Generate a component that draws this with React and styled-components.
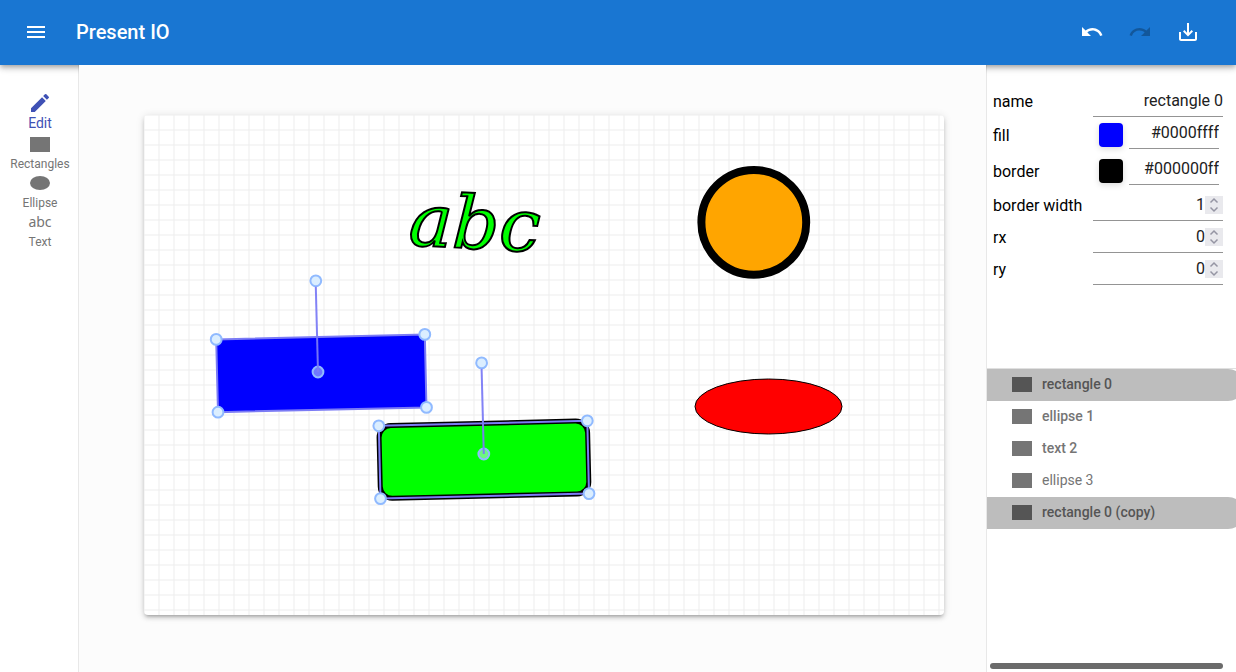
import React from "react";
import styled, { createGlobalStyle } from "styled-components";
import { MdMenu, MdUndo, MdRedo, MdSaveAlt, MdEdit } from "react-icons/md";

const GlobalStyle = createGlobalStyle`
  *, *::before, *::after { box-sizing: border-box; }
  body {
    margin: 0;
    font-family: Roboto, "Liberation Sans", sans-serif;
    font-size: 16px;
    color: #000;
    background: #fff;
  }
`;

const Page = styled.div`
  display: grid;
  grid-template-rows: auto 1fr;
  min-height: 100vh;
`;

const Header = styled.header`
  position: relative;
  z-index: 1;
  display: flex;
  align-items: center;
  height: 65px;
  padding: 0 24px 1px 12px;
  color: #fff;
  background: #1976d2;
  box-shadow: 0 2px 4px -1px rgba(0, 0, 0, 0.2),
    0 4px 5px 0 rgba(0, 0, 0, 0.14), 0 1px 10px 0 rgba(0, 0, 0, 0.12);
`;

const IconButton = styled.button`
  display: grid;
  place-items: center;
  width: 48px;
  height: 48px;
  padding: 0;
  border: 0;
  border-radius: 50%;
  color: inherit;
  background: none;

  &:disabled { color: rgba(0, 0, 0, 0.26); }
`;

const Title = styled.h1`
  flex: 1;
  margin: 0 0 0 16px;
  font-size: 20px;
  line-height: 32px;
  font-weight: 500;
`;

const Body = styled.div`
  display: grid;
  grid-template-columns: 79px minmax(0, 1fr) 250px;
`;

const Tools = styled.nav`
  display: flex;
  flex-direction: column;
  align-items: center;
  padding: 26px 0 0 2px;
  border-right: 1px solid #e8e8e8;
`;

const Tool = styled.button`
  display: flex;
  flex-direction: column;
  align-items: center;
  padding: 0 0 ${(p) => (p.$active ? 2 : 0)}px;
  border: 0;
  background: none;
  font-family: inherit;
  font-size: ${(p) => (p.$active ? 14 : 12)}px;
  line-height: 16px;
  color: ${(p) => (p.$active ? "#3f51b5" : "#757575")};
`;

const ToolIcon = styled.span`
  display: grid;
  justify-items: center;
  align-items: start;
  height: 23px;
  padding-top: 4px;
`;

const TextGlyph = styled.span`
  font-family: "Noto Sans", sans-serif;
  font-size: 14px;
  line-height: 14px;
`;

const Workspace = styled.main`
  position: relative;
  z-index: 2;
  padding: 50px 42px 50px 65px;
  background: #fcfcfc;
`;

const Sheet = styled.svg`
  display: block;
  width: 100%;
  height: auto;
  border-radius: 4px;
  background: #fff;
  box-shadow: 0 3px 3px -2px rgba(0, 0, 0, 0.2),
    0 3px 4px 0 rgba(0, 0, 0, 0.14), 0 1px 8px 0 rgba(0, 0, 0, 0.12);
`;

const Panel = styled.aside`
  display: grid;
  grid-template-rows: minmax(0, 1fr) minmax(0, 1fr);
  min-width: 0;
  overflow: hidden;
  border-left: 1px solid #e8e8e8;
`;

const Properties = styled.form`
  padding: 20px 13px 0 6px;
`;

const Field = styled.div`
  display: grid;
  grid-template-columns: 100px minmax(0, 1fr);
  align-items: center;
  height: ${(p) => (p.$tall ? 36 : 32)}px;
`;

const Label = styled.label`
  padding-top: 2px;
  line-height: 20px;
  white-space: nowrap;
`;

const Control = styled.div`
  display: flex;
  align-items: center;
  height: 32px;
  border-bottom: 1px solid #949494;
`;

const ColorControl = styled.div`
  display: flex;
  align-items: flex-start;
  gap: 6px;
  height: 36px;
  padding: 0 4px 0 6px;
`;

const ColorInput = styled.input`
  appearance: none;
  flex: none;
  width: 24px;
  height: 24px;
  margin: 6px 0 0;
  padding: 0;
  border: 0;
  border-radius: 4px;
  box-shadow: 0 2px 6px rgba(0, 0, 0, 0.15);
  overflow: hidden;

  &::-webkit-color-swatch-wrapper { padding: 0; }
  &::-webkit-color-swatch { border: 0; }
`;

const TextInput = styled.input`
  appearance: textfield;
  flex: 1;
  min-width: 0;
  width: 100%;
  height: 31px;
  padding: 0;
  border: 0;
  outline: 0;
  background: none;
  font: inherit;
  color: #212121;
  text-align: right;

  &::-webkit-inner-spin-button { appearance: none; margin: 0; }
`;

const Spinner = styled.span`
  display: grid;
  place-items: center;
  width: 18px;
  height: 18px;
  background: #e9e9ed;
`;

const Layers = styled.section`
  display: flex;
  flex-direction: column;
  justify-content: space-between;
  margin-top: -1px;
  border-top: 1px solid #e0e0e0;
`;

const LayerList = styled.ul`
  margin: 0 -8px 0 0;
  padding: 0;
  list-style: none;
`;

const Layer = styled.button`
  display: flex;
  align-items: center;
  gap: 10px;
  width: 100%;
  height: 32px;
  padding: 0 25px;
  border: 0;
  border-radius: 0 16px 16px 0;
  background: ${(p) => (p.$selected ? "#bdbdbd" : "none")};
  color: ${(p) => (p.$selected ? "#555" : "#757575")};
  font-family: inherit;
  font-size: 14px;
  line-height: 20px;
  font-weight: ${(p) => (p.$light ? 400 : 500)};
`;

const LayerName = styled.span`
  padding-bottom: 2px;
`;

const ScrollBar = styled.div`
  height: 6px;
  margin: 0 13px 3px 3px;
  border-radius: 3px;
  background: #6b6b6b;
`;

function RectShape() {
  return (
    <svg width="20" height="15" aria-hidden="true">
      <rect width="20" height="15" fill="currentColor" />
    </svg>
  );
}

function EllipseShape() {
  return (
    <svg width="20" height="14" aria-hidden="true">
      <ellipse cx="10" cy="7" rx="10" ry="7" fill="currentColor" />
    </svg>
  );
}

function Selection({ corners, knob, center }) {
  return (
    <g stroke="#7b7bf5" strokeWidth="2">
      <polygon points={corners.map((c) => c.join(",")).join(" ")} fill="none" />
      <g fill="#dbeeff" stroke="#90baff">
        {[...corners, knob].map(([x, y]) => (
          <circle key={`${x}-${y}`} cx={x} cy={y} r="5.4" />
        ))}
        <circle cx={center[0]} cy={center[1]} r="5.4" fillOpacity="0.5" />
      </g>
      <line
        x1={knob[0]}
        y1={knob[1] + 6}
        x2={center[0]}
        y2={center[1]}
        strokeOpacity="0.95"
      />
    </g>
  );
}

function Drawing() {
  return (
    <Sheet viewBox="0 0 800 500" role="img" aria-label="Slide">
      <defs>
        <pattern id="grid" width="15" height="15" patternUnits="userSpaceOnUse">
          <path d="M0 0H15M0 15H15M0 0V15M15 0V15" stroke="#ededed" />
        </pattern>
      </defs>
      <rect width="800" height="500" fill="url(#grid)" />
      <text
        transform="translate(264 130) rotate(3)"
        fontFamily="DejaVu Serif, serif"
        fontStyle="italic"
        fontSize="73"
        fill="#0f0"
        stroke="#000"
        strokeWidth="2"
      >
        abc
      </text>
      <circle cx="609.8" cy="107.3" r="52.4" fill="#ffa500" stroke="#000" strokeWidth="8" />
      <ellipse cx="624.5" cy="291.5" rx="73.5" ry="27.5" fill="#f00" stroke="#000" />
      <polygon points="72.2,224.4 280.8,219.4 282.5,292.4 74,297.2" fill="#00f" />
      <rect
        width="208.6"
        height="72.8"
        rx="12"
        transform="translate(234.8 310.8) rotate(-1.37)"
        fill="#0f0"
        stroke="#000"
        strokeWidth="5"
      />
      <Selection
        corners={[[72.2, 224.4], [280.8, 219.4], [282.5, 292.4], [74, 297.2]]}
        knob={[171.8, 165.8]}
        center={[174, 257]}
      />
      <Selection
        corners={[[234.8, 310.8], [443.3, 305.8], [445, 378.6], [236.5, 383.6]]}
        knob={[337.6, 247.9]}
        center={[339.8, 339]}
      />
    </Sheet>
  );
}

function ColorField({ id, label, color, value }) {
  return (
    <Field $tall>
      <Label htmlFor={id}>{label}</Label>
      <ColorControl>
        <ColorInput type="color" aria-label={`${label} color`} defaultValue={color} />
        <Control>
          <TextInput id={id} defaultValue={value} />
        </Control>
      </ColorControl>
    </Field>
  );
}

function NumberField({ id, label, value }) {
  return (
    <Field>
      <Label htmlFor={id}>{label}</Label>
      <Control>
        <TextInput id={id} type="number" defaultValue={value} />
        <Spinner aria-hidden="true">
          <svg width="18" height="18" fill="none" stroke="#9595a3" strokeWidth="1.5">
            <path d="M5.5 6.5L9 3L12.5 6.5M5.5 11.5L9 15L12.5 11.5" />
          </svg>
        </Spinner>
      </Control>
    </Field>
  );
}

const layers = [
  { name: "rectangle 0", selected: true },
  { name: "ellipse 1" },
  { name: "text 2" },
  { name: "ellipse 3", light: true },
  { name: "rectangle 0 (copy)", selected: true },
];

export default function App() {
  return (
    <Page>
      <GlobalStyle />
      <Header>
        <IconButton aria-label="Menu"><MdMenu size={24} /></IconButton>
        <Title>Present IO</Title>
        <IconButton aria-label="Undo"><MdUndo size={24} /></IconButton>
        <IconButton aria-label="Redo" disabled><MdRedo size={24} /></IconButton>
        <IconButton aria-label="Save"><MdSaveAlt size={24} /></IconButton>
      </Header>
      <Body>
        <Tools>
          <Tool $active>
            <MdEdit size={24} />
            Edit
          </Tool>
          <Tool>
            <ToolIcon><RectShape /></ToolIcon>
            Rectangles
          </Tool>
          <Tool>
            <ToolIcon><EllipseShape /></ToolIcon>
            Ellipse
          </Tool>
          <Tool>
            <ToolIcon><TextGlyph>abc</TextGlyph></ToolIcon>
            Text
          </Tool>
        </Tools>
        <Workspace>
          <Drawing />
        </Workspace>
        <Panel>
          <Properties>
            <Field>
              <Label htmlFor="name">name</Label>
              <Control>
                <TextInput id="name" defaultValue="rectangle 0" />
              </Control>
            </Field>
            <ColorField id="fill" label="fill" color="#0000ff" value="#0000ffff" />
            <ColorField id="border" label="border" color="#000000" value="#000000ff" />
            <NumberField id="border-width" label="border width" value="1" />
            <NumberField id="rx" label="rx" value="0" />
            <NumberField id="ry" label="ry" value="0" />
          </Properties>
          <Layers>
            <LayerList>
              {layers.map((layer) => (
                <li key={layer.name}>
                  <Layer $selected={layer.selected} $light={layer.light}>
                    <RectShape />
                    <LayerName>{layer.name}</LayerName>
                  </Layer>
                </li>
              ))}
            </LayerList>
            <ScrollBar />
          </Layers>
        </Panel>
      </Body>
    </Page>
  );
}
